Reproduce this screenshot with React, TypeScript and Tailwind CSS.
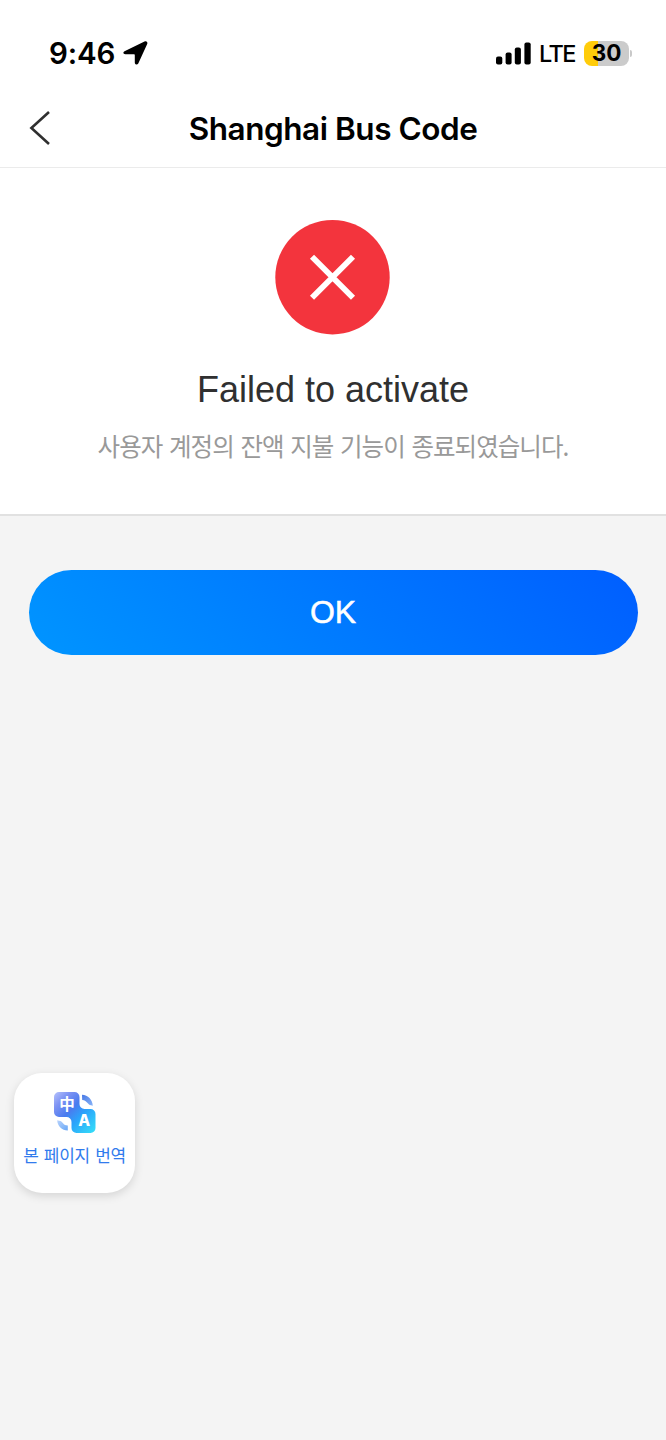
function StatusBar() {
  return (
    <div className="flex h-[88px] items-start pl-[49px] pr-[34px] pt-[34px] text-black">
      <span className="mt-px font-['Inter',sans-serif] text-[29.5px] leading-9 font-semibold tracking-[-0.1px]">9:46</span>
      <svg className="mt-[7px] ml-[8px] h-[24px] w-[25px]" viewBox="0 0 25 24" fill="currentColor">
        <path d="M1.500 10.200 21.500.6c1.900-.8 3.400.6 2.700 2.400L15.400 22.300c-.9 1.900-3.600 1.400-3.600-.9v-7c0-.8-.3-1.100-1.100-1.100l-8.300-.1C.1 13.200-.3 11.100 1.500 10.200Z" />
      </svg>
      <div className="ml-auto flex items-center">
        <svg className="h-[23px] w-[35px]" viewBox="0 0 35 23" fill="currentColor">
          <rect x="0" y="14.5" width="6.3" height="8" rx="2" />
          <rect x="9.6" y="10.5" width="6" height="12" rx="2" />
          <rect x="18.8" y="5.5" width="6.1" height="17" rx="2" />
          <rect x="28.4" y=".5" width="6.3" height="22" rx="2" />
        </svg>
        <span className="mt-[2px] ml-[8px] font-['Inter',sans-serif] text-[23.5px] leading-9 font-medium tracking-[-1.5px]">LTE</span>
        <div className="ml-[9px] flex h-[25px] w-[45px] items-center justify-center rounded-[8px] bg-[linear-gradient(90deg,#ffcc0a_0_14px,#cbcbcb_14px)]">
          <span className="font-['Inter',sans-serif] text-[22.5px] leading-6 font-bold">30</span>
        </div>
        <span className="ml-px h-[7px] w-[2px] rounded-r-full bg-[#c9c9c9]" />
      </div>
    </div>
  );
}

function Header() {
  return (
    <header className="grid h-[80px] grid-cols-[80px_1fr_80px] items-center border-b border-[#ebebeb]">
      <button className="pl-[29px]" aria-label="Back">
        <svg className="h-[36px] w-[22px]" viewBox="0 0 22 36" fill="none" stroke="#2f2f2f" strokeWidth="2.6">
          <path d="M20 2 2.4 18 20 34" />
        </svg>
      </button>
      <h1 className="mt-[2px] text-center font-['Inter',sans-serif] text-[31.5px] leading-10 font-semibold tracking-[-0.45px] whitespace-nowrap text-black">
        Shanghai Bus Code
      </h1>
    </header>
  );
}

function TranslateIcon() {
  return (
    <svg className="h-[42px] w-[42px]" viewBox="0 0 42 42">
      <defs>
        <linearGradient id="tiles" gradientUnits="userSpaceOnUse" x1="0" y1="0" x2="41" y2="41">
          <stop offset="0" stopColor="#b5c2fc" />
          <stop offset=".2" stopColor="#7e93f3" />
          <stop offset=".42" stopColor="#4a7bef" />
          <stop offset=".62" stopColor="#2ba3fb" />
          <stop offset="1" stopColor="#35e0f8" />
        </linearGradient>
        <linearGradient id="upperLeaf" x1="0" y1="0" x2="1" y2="1">
          <stop offset="0" stopColor="#4778e5" />
          <stop offset="1" stopColor="#8ab5f8" />
        </linearGradient>
        <linearGradient id="lowerLeaf" x1="0" y1="0" x2="1" y2="1">
          <stop offset="0" stopColor="#b9d3fc" />
          <stop offset="1" stopColor="#68a7f6" />
        </linearGradient>
      </defs>
      <path
        d="M5 0h15.5a5 5 0 0 1 5 5v7a5 5 0 0 0 5 5h6a5 5 0 0 1 5 5v14a5 5 0 0 1-5 5h-14a5 5 0 0 1-5-5v-6a5 5 0 0 0-5-5H5a5 5 0 0 1-5-5V5a5 5 0 0 1 5-5Z"
        fill="url(#tiles)"
      />
      <path d="M28 2.8c6 .4 10.5 4.8 10.8 10.9-2.8-.4-3.6-.8-5-2.4C32 9.2 31 8.2 28.2 8Z" fill="url(#upperLeaf)" />
      <path d="M3.2 28.2c3 .5 4 .9 5.6 2.7 1.7 1.9 2.4 2.3 5 2.5v5C7.8 38.3 3.5 34.2 3.2 28.2Z" fill="url(#lowerLeaf)" />
      <text x="12.9" y="18.4" textAnchor="middle" fill="white" fontFamily="Noto Sans CJK SC, sans-serif" fontSize="15.5" fontWeight="700">中</text>
      <text x="30.1" y="34" textAnchor="middle" fill="white" fontFamily="Inter, sans-serif" fontSize="15.5" fontWeight="800">A</text>
    </svg>
  );
}

export default function App() {
  return (
    <div className="relative flex h-[1440px] w-[666px] flex-col overflow-hidden bg-[#f4f4f4]">
      <div className="bg-white">
        <StatusBar />
        <Header />
        <section className="flex h-[348px] flex-col items-center border-b-2 border-[#e1e1e1] pt-[52px]">
          <svg className="mr-[2px] h-[115px] w-[115px]" viewBox="0 0 115 115">
            <circle cx="57.5" cy="57.2" r="57.2" fill="#f3343d" />
            <path d="m37 36.8 41 41m0-41-41 41" stroke="white" strokeWidth="5.8" />
          </svg>
          <h2 className="mt-[34px] font-['Liberation_Sans',sans-serif] text-[36px] leading-[42px] whitespace-nowrap text-[#303030]">
            Failed to activate
          </h2>
          <p className="mt-[17px] font-['Noto_Sans_CJK_KR',sans-serif] text-[24.5px] leading-[36px] font-normal tracking-[-0.95px] [word-spacing:2.1px] whitespace-nowrap text-[#999999]">
            사용자 계정의 잔액 지불 기능이 종료되였습니다.
          </p>
        </section>
      </div>
      <main className="px-[28.5px] pt-[53.5px]">
        <button className="flex h-[85px] w-full items-center justify-center rounded-full bg-[linear-gradient(45deg,#0095ff,#005eff)] font-['Liberation_Sans',sans-serif] text-[32px] text-white [-webkit-text-stroke:0.5px_white]">
          OK
        </button>
      </main>
      <button className="absolute top-[1073px] left-[14px] flex h-[120px] w-[121px] flex-col items-center rounded-[28px] bg-white pt-[19px] shadow-[0_3px_10px_rgba(0,0,0,0.13)]">
        <TranslateIcon />
        <span className="mt-[9px] font-['Noto_Sans_CJK_KR',sans-serif] text-[17px] leading-6 tracking-[-0.3px] [word-spacing:1.8px] whitespace-nowrap text-[#317bed]">
          본 페이지 번역
        </span>
      </button>
    </div>
  );
}
